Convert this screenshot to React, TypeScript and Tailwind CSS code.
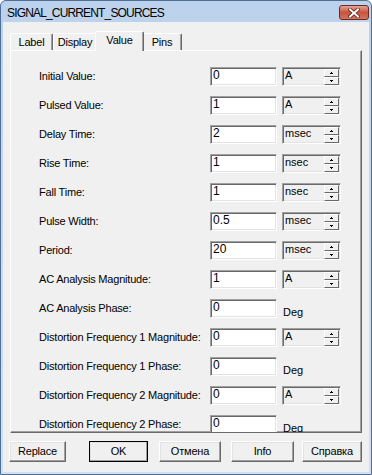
import React from 'react';

type Row = { label: string; value: string; unit?: string };

const rows: Row[] = [
  { label: 'Initial Value:', value: '0', unit: 'A' },
  { label: 'Pulsed Value:', value: '1', unit: 'A' },
  { label: 'Delay Time:', value: '2', unit: 'msec' },
  { label: 'Rise Time:', value: '1', unit: 'nsec' },
  { label: 'Fall Time:', value: '1', unit: 'nsec' },
  { label: 'Pulse Width:', value: '0.5', unit: 'msec' },
  { label: 'Period:', value: '20', unit: 'msec' },
  { label: 'AC Analysis Magnitude:', value: '1', unit: 'A' },
  { label: 'AC Analysis Phase:', value: '0' },
  { label: 'Distortion Frequency 1 Magnitude:', value: '0', unit: 'A' },
  { label: 'Distortion Frequency 1 Phase:', value: '0' },
  { label: 'Distortion Frequency 2 Magnitude:', value: '0', unit: 'A' },
  { label: 'Distortion Frequency 2 Phase:', value: '0' },
];

const sunken =
  'border border-t-[#a0a0a0] border-l-[#a0a0a0] border-r-white border-b-white shadow-[inset_1px_1px_0_#696969,inset_-1px_-1px_0_#e3e3e3]';
const raised =
  'border border-t-white border-l-white border-r-[#696969] border-b-[#696969] shadow-[inset_-1px_-1px_0_#a0a0a0,inset_1px_1px_0_#e3e3e3]';

function Spinner() {
  return (
    <div className="flex flex-col w-[15px] mr-[1px] mt-[1px] self-start">
      <div className={`h-[8px] flex items-center justify-center bg-[#f0f0f0] border border-t-white border-l-white border-r-[#696969] border-b-[#696969]`}>
        <svg width="3" height="2" viewBox="0 0 3 2" shapeRendering="crispEdges">
          <rect x="1" y="0" width="1" height="1" fill="#000" />
          <rect x="0" y="1" width="3" height="1" fill="#000" />
        </svg>
      </div>
      <div className={`h-[8px] flex items-center justify-center bg-[#f0f0f0] border border-t-white border-l-white border-r-[#696969] border-b-[#696969]`}>
        <svg width="3" height="2" viewBox="0 0 3 2" shapeRendering="crispEdges">
          <rect x="0" y="0" width="3" height="1" fill="#000" />
          <rect x="1" y="1" width="1" height="1" fill="#000" />
        </svg>
      </div>
    </div>
  );
}

function FieldRow({ row }: { row: Row }) {
  return (
    <div className="flex h-[19px] shrink-0">
      <div className="w-[171px] text-[11px] tracking-[-0.2px] leading-[19px] whitespace-nowrap">{row.label}</div>
      <div className={`w-[67px] h-[19px] bg-white ${sunken}`}>
        <div className="pl-[2px] text-[12px] leading-[14px]">{row.value}</div>
      </div>
      {row.unit ? (
        <div className={`ml-[5px] w-[59px] h-[19px] flex bg-[#f0f0f0] ${sunken}`}>
          <div className="flex-1 pl-[2px] text-[11px] leading-[14px]">{row.unit}</div>
          <Spinner />
        </div>
      ) : (
        <div className="ml-[6px] pt-[8px] text-[11px] leading-none">Deg</div>
      )}
    </div>
  );
}

function Tab({ label, active, w }: { label: string; active?: boolean; w: string }) {
  if (active) {
    return (
      <div
        className={`${w} -mx-[2px] h-[20px] -mb-[1px] relative z-10 bg-[#f0f0f0] border-t border-l border-white border-r border-r-[#696969] shadow-[inset_-1px_0_0_#a0a0a0] rounded-t-[2px] text-center text-[11px] tracking-[-0.2px] leading-[17px]`}
      >
        {label}
      </div>
    );
  }
  return (
    <div
      className={`${w} h-[17px] bg-[#f0f0f0] border-t border-l border-white border-r border-r-[#696969] shadow-[inset_-1px_0_0_#a0a0a0] rounded-t-[2px] text-center text-[11px] tracking-[-0.2px] leading-[16px]`}
    >
      {label}
    </div>
  );
}

function Btn({ label, cls, def }: { label: string; cls: string; def?: boolean }) {
  return (
    <div className={`${cls} h-[21px] ${def ? 'outline outline-1 outline-black -outline-offset-1' : ''}`}>
      <div
        className={`h-full bg-[#f0f0f0] ${raised} flex items-center justify-center text-[11px] tracking-[-0.2px]`}
      >
        {label}
      </div>
    </div>
  );
}

export default function App() {
  return (
    <div className="w-[372px] h-[475px] flex flex-col bg-gradient-to-b from-[#bcd2ec] to-[#cfe0f3] border border-[#4f6f97] rounded-t-[6px] overflow-hidden font-['Liberation_Sans',Arial,sans-serif] text-black select-none">
      {/* title bar */}
      <div className="h-[21px] flex shrink-0">
        <div className="pl-[6px] pt-[4px] text-[12px] leading-[16px] tracking-[-0.07em] whitespace-nowrap">
          SIGNAL_CURRENT_SOURCES
        </div>
        <div className="ml-auto mr-[2px] mt-[4px] w-[30px] h-[15px] rounded-[3px] border border-[#6b2a20] bg-gradient-to-b from-[#e3a395] via-[#c9533d] to-[#d4745c] flex items-center justify-center">
          <svg width="12" height="10" viewBox="0 0 12 10">
            <path d="M2 1.5 L10 8.5 M10 1.5 L2 8.5" stroke="#5a1f16" strokeWidth="3.6" strokeLinecap="square" />
            <path d="M2 1.5 L10 8.5 M10 1.5 L2 8.5" stroke="#fff" strokeWidth="2" strokeLinecap="square" />
          </svg>
        </div>
      </div>

      {/* client */}
      <div className="flex-1 mx-[2px] mb-[2px] bg-[#f0f0f0] flex flex-col pl-[7px] pt-[9px]">
        <div className="h-[19px] flex items-end">
          <Tab label="Label" w="w-[43px]" />
          <Tab label="Display" w="w-[44px]" />
          <Tab label="Value" w="w-[49px]" active />
          <Tab label="Pins" w="w-[40px]" />
        </div>

        <div className="w-[352px] h-[383px] border-t border-l border-white border-r border-b border-r-[#696969] border-b-[#696969] shadow-[inset_-1px_-1px_0_#a0a0a0] overflow-hidden">
          <div className="pl-[28px] pt-[16px] flex flex-col gap-[10px]">
            {rows.map((r) => (
              <FieldRow key={r.label} row={r} />
            ))}
          </div>
        </div>

        <div className="mt-[8px] flex">
          <Btn label="Replace" cls="ml-[-1px] w-[57px]" />
          <Btn label="OK" cls="ml-[23px] w-[59px]" def />
          <Btn label="Отмена" cls="ml-[11px] w-[62px]" />
          <Btn label="Info" cls="ml-[10px] w-[63px]" />
          <Btn label="Справка" cls="ml-[8px] w-[60px]" />
        </div>
      </div>
    </div>
  );
}
